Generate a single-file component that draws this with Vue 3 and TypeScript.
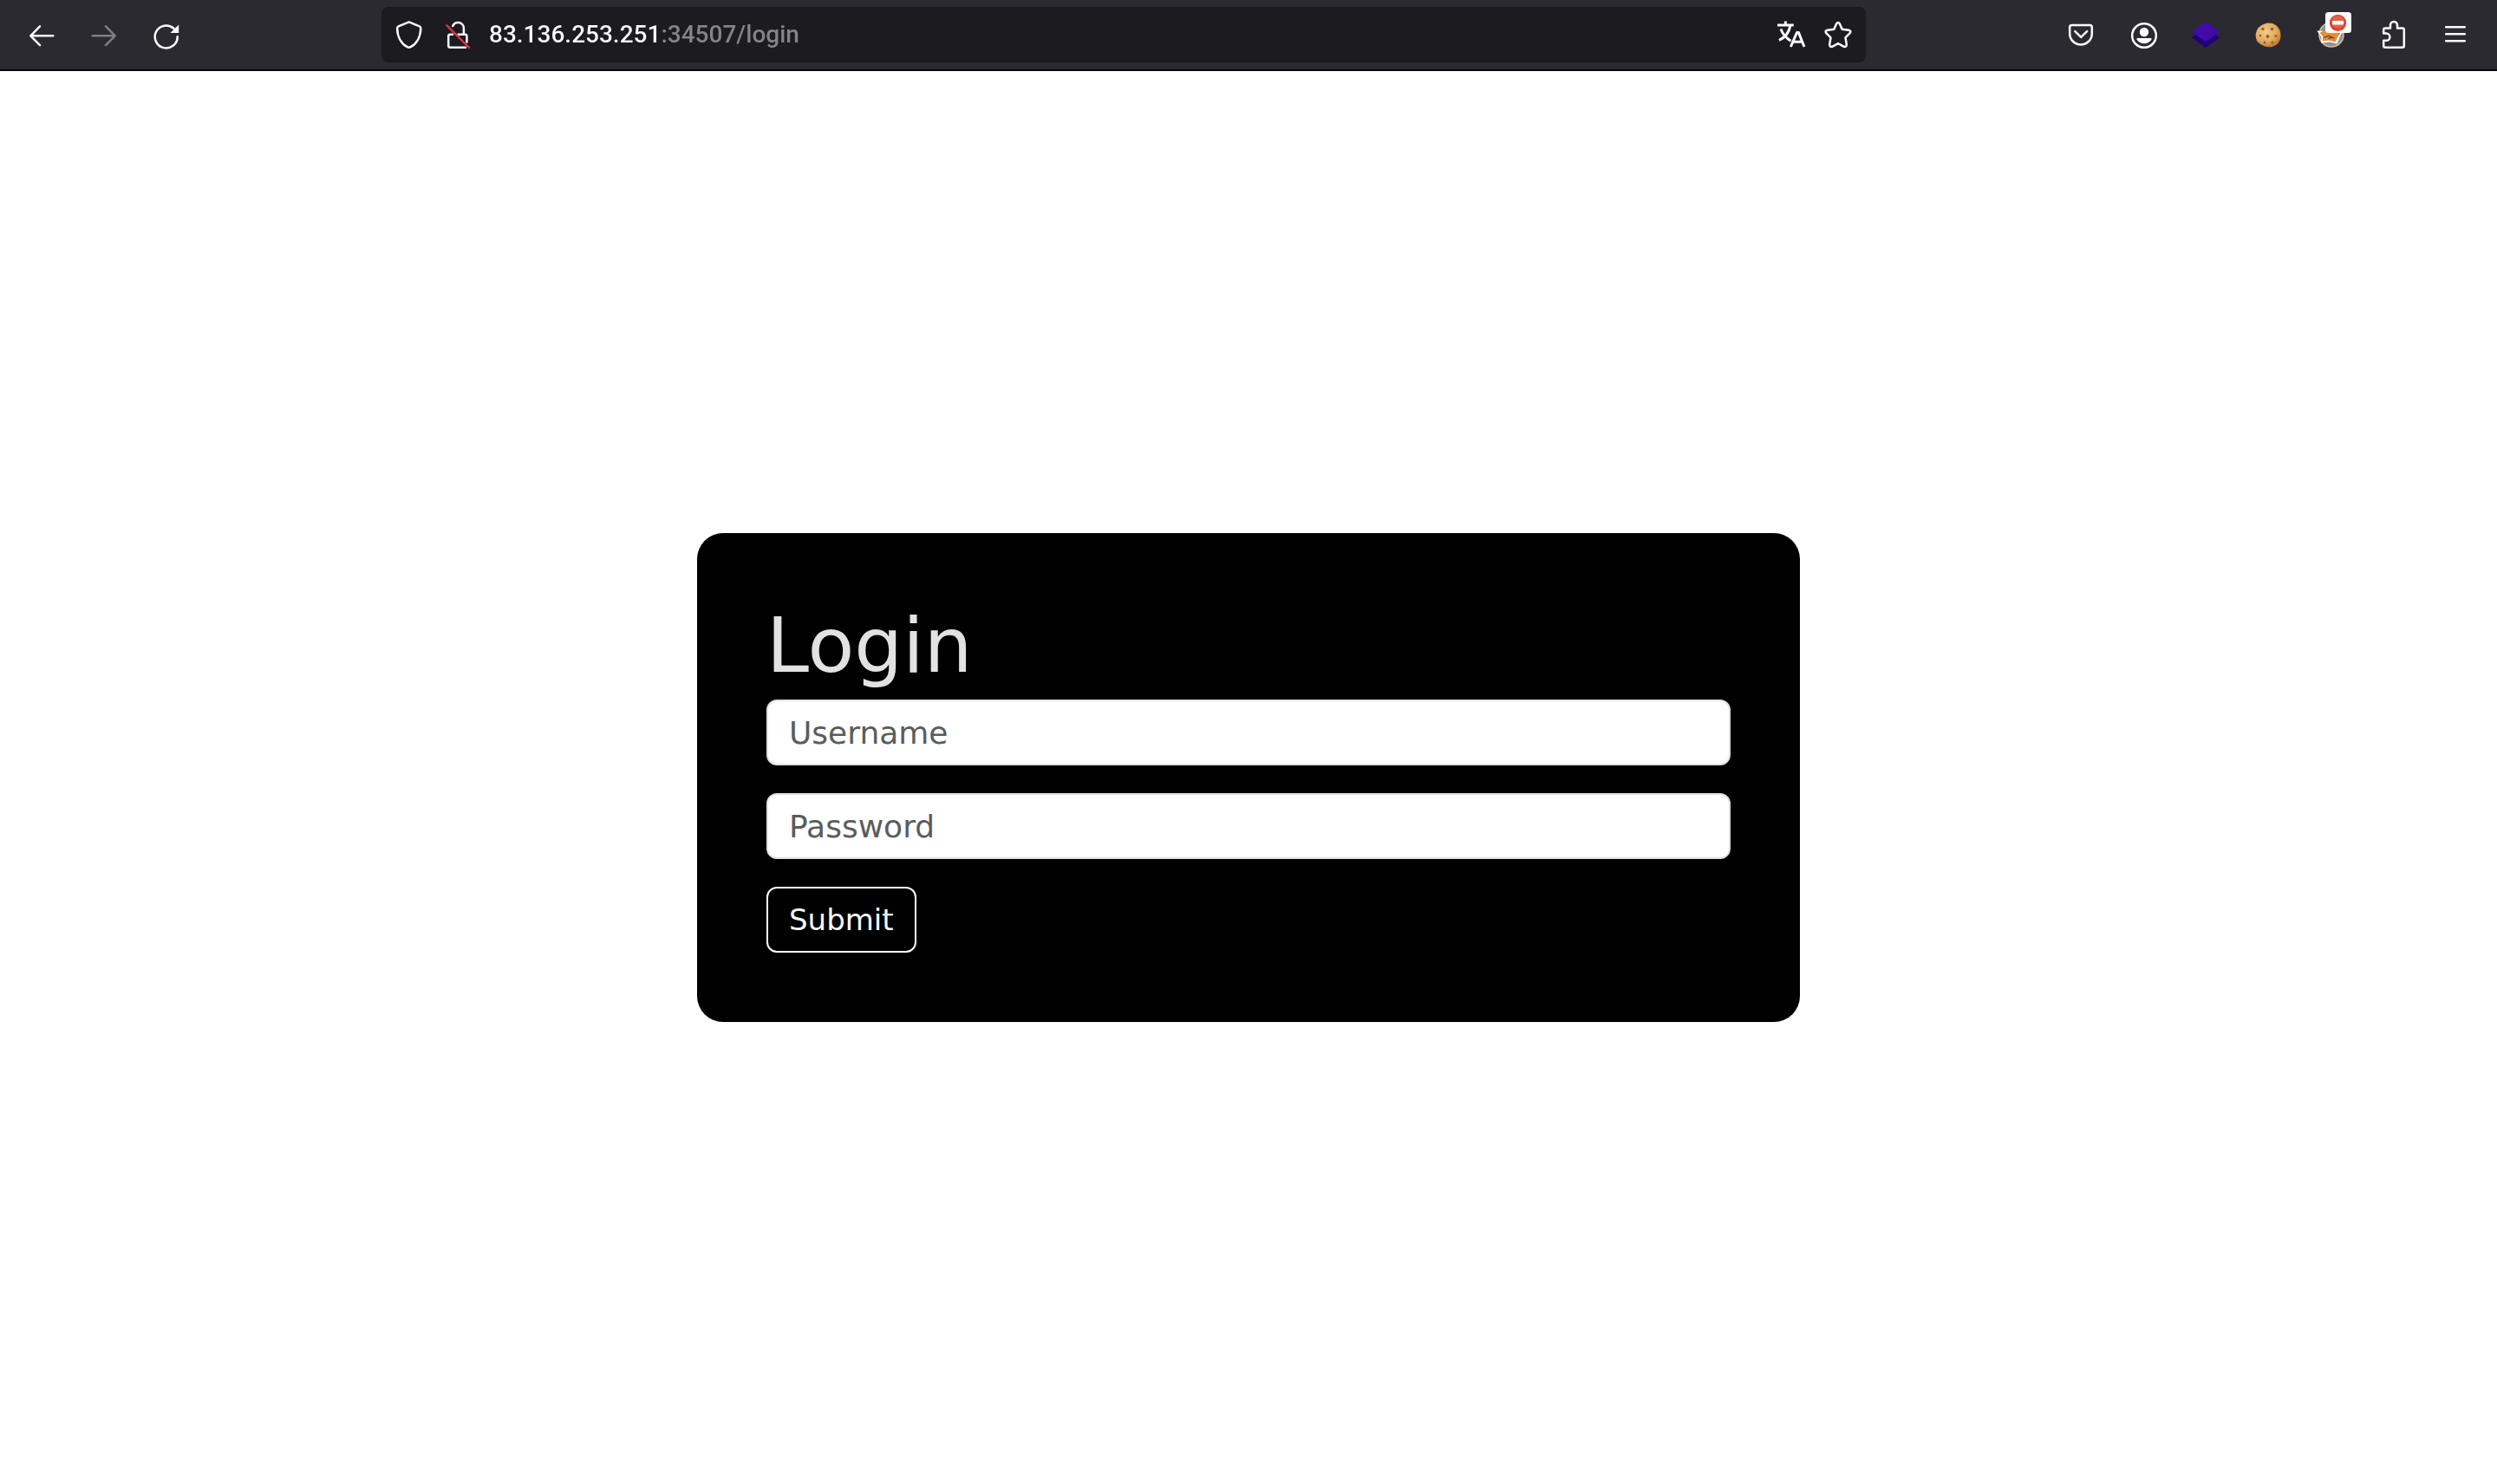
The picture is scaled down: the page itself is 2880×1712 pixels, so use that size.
<script setup lang="ts">
import { ref } from 'vue'

const address = ref('83.136.253.251:34507/login')
const username = ref('')
const password = ref('')
</script>

<template>
  <div class="window">
    <header class="toolbar">
      <nav class="group" aria-label="Navigation">
        <button class="tool" type="button" aria-label="Back">
          <svg class="icon" viewBox="0 0 32 32"><path d="M14 6.4 3.3 17.3 14 28.2M3.3 17.3H29.3" /></svg>
        </button>
        <button class="tool" type="button" aria-label="Forward" disabled>
          <svg class="icon" viewBox="0 0 32 32"><path d="M18 6.4 28.7 17.3 18 28.2M28.7 17.3H2.7" /></svg>
        </button>
        <button class="tool" type="button" aria-label="Reload">
          <svg class="icon" viewBox="0 0 32 32">
            <path d="M28.7 18.2A13 13 0 1 1 24.4 8.8" />
            <path class="solid" d="M30.2 4.4V14H20.4Z" />
          </svg>
        </button>
      </nav>

      <form class="address" @submit.prevent>
        <svg class="icon" viewBox="0 0 32 32">
          <path d="M15.7 1.4 27.8 6.3Q29.3 7 29.3 8.6C29 18.5 24.6 26.7 17.5 30.2Q15.7 31.2 13.9 30.2C6.8 26.7 2.4 18.5 2.1 8.6Q2.1 7 3.6 6.3Z" />
        </svg>
        <svg class="icon" viewBox="0 0 32 32">
          <path d="M12.2 6A6.6 6.6 0 0 1 24.9 8.4V15.8M18.5 15.8H26.4Q28.4 15.8 28.4 17.8V24.5M12 15.8H9.2Q7.2 15.8 7.2 17.8V28.7Q7.2 30.7 9.2 30.7H27" />
          <path class="slash" d="M5.4 5.4 31 30.8" />
        </svg>
        <input v-model="address" class="url" type="text" aria-label="Address" spellcheck="false" />
        <svg class="icon" viewBox="0 0 32 32">
          <path class="flat" d="M0 4.9H18.8M9.4 .4V5M15 5.4C13.5 13 8.5 19.5 2 22.4M4 9.5C6 15 10 20 15.6 23.2M15.4 30 22.6 13.4H24.4L31 30M18 24.2H28.8" />
        </svg>
        <svg class="icon" viewBox="0 0 32 32">
          <path d="M14.2 3.2Q16 .8 17.8 3.2L20.7 9.8 28.2 10.8Q31.6 11.6 29.7 14.2L24.5 19.4 25.8 27.3Q25.8 30.7 22.8 29.8L16 26.2 9.2 29.8Q6.2 30.7 6.2 27.3L7.5 19.4 2.3 14.2Q.4 11.6 3.8 10.8L11.3 9.8Z" />
        </svg>
      </form>

      <div class="group">
        <button class="tool" type="button" aria-label="Save to Pocket">
          <svg class="icon" viewBox="0 0 32 32"><path d="M5.5 5H26.5Q28.8 5 28.8 7.3V14.7A12.8 12.8 0 0 1 3.2 14.7V7.3Q3.2 5 5.5 5ZM9.3 12.2 16.2 18.9 23.1 12.2" /></svg>
        </button>
        <button class="tool" type="button" aria-label="Account">
          <svg class="icon" viewBox="0 0 32 32">
            <circle cx="17" cy="17" r="13.8" />
            <circle class="solid" cx="17" cy="13" r="5.2" />
            <path class="solid" d="M9.6 20H24.4Q26.6 20 25 22.3C21 27.7 13 27.7 9 22.3Q7.4 20 9.6 20Z" />
          </svg>
        </button>
        <button class="tool" type="button" aria-label="Layers">
          <svg class="icon plain" viewBox="0 0 32 32">
            <path fill="#21007c" d="M16 8 32 19.5 16 31 0 19.5Z" />
            <path fill="#420aa9" d="M16 1 32 12.6 16 24.2 0 12.6Z" />
          </svg>
        </button>
        <button class="tool" type="button" aria-label="Cookies">
          <svg class="icon plain" viewBox="0 0 32 32">
            <defs>
              <radialGradient id="dough" cx=".4" cy=".35" r=".7">
                <stop offset="0" stop-color="#f2cb86" />
                <stop offset=".6" stop-color="#e2ab60" />
                <stop offset="1" stop-color="#bd742b" />
              </radialGradient>
            </defs>
            <path fill="url(#dough)" d="M14 2.8Q20 1.8 25 5 31 10 30.6 18 30 27 21 30 13 31 8 27.5 1 24 1.6 15.5 3 6 14 2.8Z" />
            <g fill="#92602f">
              <circle cx="10" cy="9.5" r="1.8" /><circle cx="20.5" cy="9.5" r="1.8" />
              <circle cx="7" cy="17" r="1.3" /><circle cx="15.5" cy="18" r="1.9" />
              <circle cx="25" cy="17.5" r="1.6" /><circle cx="12" cy="25" r="1.4" />
              <circle cx="21" cy="25" r="1.6" />
            </g>
          </svg>
        </button>
        <button class="tool" type="button" aria-label="Proxy">
          <svg class="icon plain" viewBox="0 0 32 32">
            <circle cx="17" cy="16" r="14" fill="#8a929e" stroke="#e2b98d" stroke-width="1.6" />
            <path fill="#fff" d="M.3 11.5 9 12 30 12 27 18 23.5 26.5 15 24.5 5 25.5 5.5 19Z" />
            <path fill="#e88a37" d="M3.5 13.8 12 10 29 12 24.5 18 21.5 24.5 14 22.5 7 23.5 7 18Z" />
            <path fill="none" stroke="#5b3b28" stroke-width="1.3" d="M9 19 14 17.5 20 20M14 20.5 17 19.5" />
            <rect x="10" y="-10" width="30" height="24" rx="3.5" fill="#fff" />
            <circle cx="24.5" cy="2.4" r="9.6" fill="#d9432f" />
            <circle cx="24.5" cy="1.2" r="7.6" fill="#e0614c" />
            <rect x="18" y="0" width="13" height="4.6" rx="1" fill="#fff" />
          </svg>
        </button>
        <button class="tool" type="button" aria-label="Extensions">
          <svg class="icon" viewBox="0 0 32 32"><path d="M5.2 14.6V10.5Q5.2 8.6 7.2 8.6H13V5A4 4 0 0 1 21 5V8.6H26.8Q28.8 8.6 28.8 10.6V28.8Q28.8 30.8 26.8 30.8H7.2Q5.2 30.8 5.2 28.8V22.8H8.3A4.1 4.1 0 0 0 8.3 14.6Z" /></svg>
        </button>
        <button class="tool" type="button" aria-label="Menu">
          <svg class="icon" viewBox="0 0 32 32"><path d="M5.2 7.3H26.8M5.2 15.3H26.8M5.2 23.3H26.8" /></svg>
        </button>
      </div>
    </header>

    <main class="page">
      <form class="card" @submit.prevent>
        <h1 class="title">Login</h1>
        <div class="fields">
          <input v-model="username" class="field" type="text" placeholder="Username" aria-label="Username" />
          <input v-model="password" class="field" type="password" placeholder="Password" aria-label="Password" />
          <button class="submit" type="submit">Submit</button>
        </div>
      </form>
    </main>
  </div>
</template>

<style>
body {
  background: #fff;
}
</style>

<style scoped>
.window {
  display: flex;
  flex-direction: column;
  min-height: 100vh;
}

.toolbar {
  display: flex;
  align-items: center;
  height: 80px;
  padding: 0 12px;
  background: #2b2a31;
  border-bottom: 2px solid #060607;
}

.group {
  display: flex;
  flex: none;
}

.tool {
  display: flex;
  align-items: center;
  justify-content: center;
  width: 72px;
  height: 64px;
  padding: 0;
  border: 0;
  background: none;
}

.tool:disabled {
  opacity: 0.4;
}

.icon {
  flex: none;
  width: 32px;
  height: 32px;
  overflow: visible;
  fill: none;
  stroke: #fbfbfe;
  stroke-width: 2.5;
  stroke-linecap: round;
  stroke-linejoin: round;
}

.icon.plain {
  stroke: none;
}

.icon .solid {
  fill: #fbfbfe;
  stroke: none;
}

.icon .flat {
  stroke-width: 3;
  stroke-linecap: butt;
}

.icon .slash {
  stroke: #d7324a;
}

.address {
  display: flex;
  flex: 1;
  align-items: center;
  gap: 22px;
  box-sizing: border-box;
  height: 64px;
  margin: 0 212px;
  padding: 0 16px;
  border-radius: 8px;
  background: #1c1b20;
}

/* The host is bright and the port and path after it are dimmed. */
.url {
  flex: 1;
  min-width: 0;
  height: 40px;
  padding: 0;
  border: 0;
  outline: 0;
  background: linear-gradient(90deg, #fbfbfe 196px, #85848a 196px);
  background-clip: text;
  -webkit-background-clip: text;
  -webkit-text-fill-color: transparent;
  color: #fbfbfe;
  font: 500 28px/40px Roboto, "Liberation Sans", sans-serif;
}

.page {
  display: flex;
  flex: 1;
  align-items: center;
  justify-content: center;
}

.card {
  box-sizing: border-box;
  width: 100%;
  max-width: 1272px;
  padding: 80px;
  border-radius: 30px;
  background: #000;
  font-family: "DejaVu Sans", sans-serif;
}

.title {
  margin: 0 0 12px;
  color: #e2e2e2;
  font-size: 88px;
  font-weight: 400;
  line-height: 100px;
}

.fields {
  display: flex;
  flex-direction: column;
  align-items: flex-start;
  gap: 32px;
}

.field,
.submit {
  box-sizing: border-box;
  height: 76px;
  padding: 0 24px;
  border: 2px solid #dee2e6;
  border-radius: 12px;
  font-family: inherit;
  font-size: 36px;
}

.field {
  width: 100%;
  background: #fff;
  color: #212529;
}

.field::placeholder {
  color: #5a5c5e;
  opacity: 1;
}

.submit {
  border-color: #fff;
  background: #000;
  color: #f8f9fa;
  font-size: 34px;
}
</style>
